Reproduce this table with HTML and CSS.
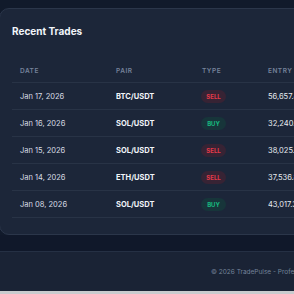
FILE: index.html
```html
<!DOCTYPE html>
<html>
<head>
<meta charset="utf-8">
<link rel="stylesheet" href="styles.css">
</head>
<body>
<div class="page">
  <section class="card">
    <h2 class="title">Recent Trades</h2>
    <table class="trades">
      <thead>
        <tr><th class="c-date">Date</th><th class="c-pair">Pair</th><th class="c-type">Type</th><th class="c-entry">Entry</th></tr>
      </thead>
      <tbody>
        <tr><td>Jan 17, 2026</td><td class="pair">BTC/USDT</td><td><span class="badge sell">SELL</span></td><td class="num">56,657.42</td></tr>
        <tr><td>Jan 16, 2026</td><td class="pair">SOL/USDT</td><td><span class="badge buy">BUY</span></td><td class="num">32,240.18</td></tr>
        <tr><td>Jan 15, 2026</td><td class="pair">SOL/USDT</td><td><span class="badge sell">SELL</span></td><td class="num">38,025.61</td></tr>
        <tr><td>Jan 14, 2026</td><td class="pair">ETH/USDT</td><td><span class="badge sell">SELL</span></td><td class="num">37,536.80</td></tr>
        <tr><td>Jan 08, 2026</td><td class="pair">SOL/USDT</td><td><span class="badge buy">BUY</span></td><td class="num">43,017.35</td></tr>
      </tbody>
    </table>
  </section>
  <div class="gap"></div>
  <footer class="footer">
    <p class="copy">© 2026 TradePulse - Professional Trading Journal</p>
  </footer>
  <div class="scrollbar"></div>
</div>
</body>
</html>
```
FILE: styles.css
```css
html, body {
  margin: 0;
  padding: 0;
}
body {
  width: 294px;
  height: 294px;
  overflow: hidden;
  background: #111a2b;
  font-family: Inter, "Noto Sans", "Liberation Sans", sans-serif;
  color: #e2e8f0;
}
.page {
  width: 294px;
  padding-top: 8px;
  display: flex;
  flex-direction: column;
}
.card {
  width: 420px;
  box-sizing: border-box;
  height: 227px;
  background: #1c2639;
  border: 1px solid #2b364a;
  border-radius: 10px;
  padding: 0 0 0 12px;
  margin-left: -1px;
}
.title {
  margin: 15px 0 0 0;
  font-size: 10px;
  line-height: 14px;
  font-weight: 700;
  color: #f1f5f9;
}
.trades {
  margin-top: 22px;
  border-collapse: collapse;
  table-layout: fixed;
  width: 400px;
}
.trades th {
  text-align: left;
  font-size: 6.5px;
  font-weight: 600;
  letter-spacing: 0.5px;
  text-transform: uppercase;
  color: #75829a;
  height: 22px;
  padding: 0 8px;
  border-bottom: 1px solid #283346;
  vertical-align: middle;
}
.c-date { width: 80px; }
.c-pair { width: 70px; }
.c-type { width: 50px; }
.trades td {
  height: 26px;
  padding: 0 8px;
  font-size: 7.5px;
  color: #d8dde5;
  border-bottom: 1px solid #283346;
  vertical-align: middle;
  white-space: nowrap;
}
.trades td.pair {
  font-weight: 700;
  color: #f1f5f9;
}
.trades td.num {
  color: #e8ecf1;
}
.badge {
  display: inline-block;
  font-size: 6px;
  font-weight: 700;
  line-height: 13px;
  height: 13px;
  width: 25px;
  text-align: center;
  border-radius: 7px;
  margin-left: -1px;
}
.sell {
  color: #e43a4a;
  background: #372334;
}
.buy {
  color: #17b77f;
  background: #17353a;
}
.gap {
  height: 16px;
  background: #10182a;
}
.footer {
  height: 39px;
  border-top: 1px solid #253044;
  background: #1a2335;
  display: flex;
  align-items: center;
}
.copy {
  margin: 0 0 0 211px;
  font-size: 6.5px;
  color: #74839a;
  white-space: nowrap;
}
.scrollbar {
  height: 4px;
  background: #c9cbce;
}
```
